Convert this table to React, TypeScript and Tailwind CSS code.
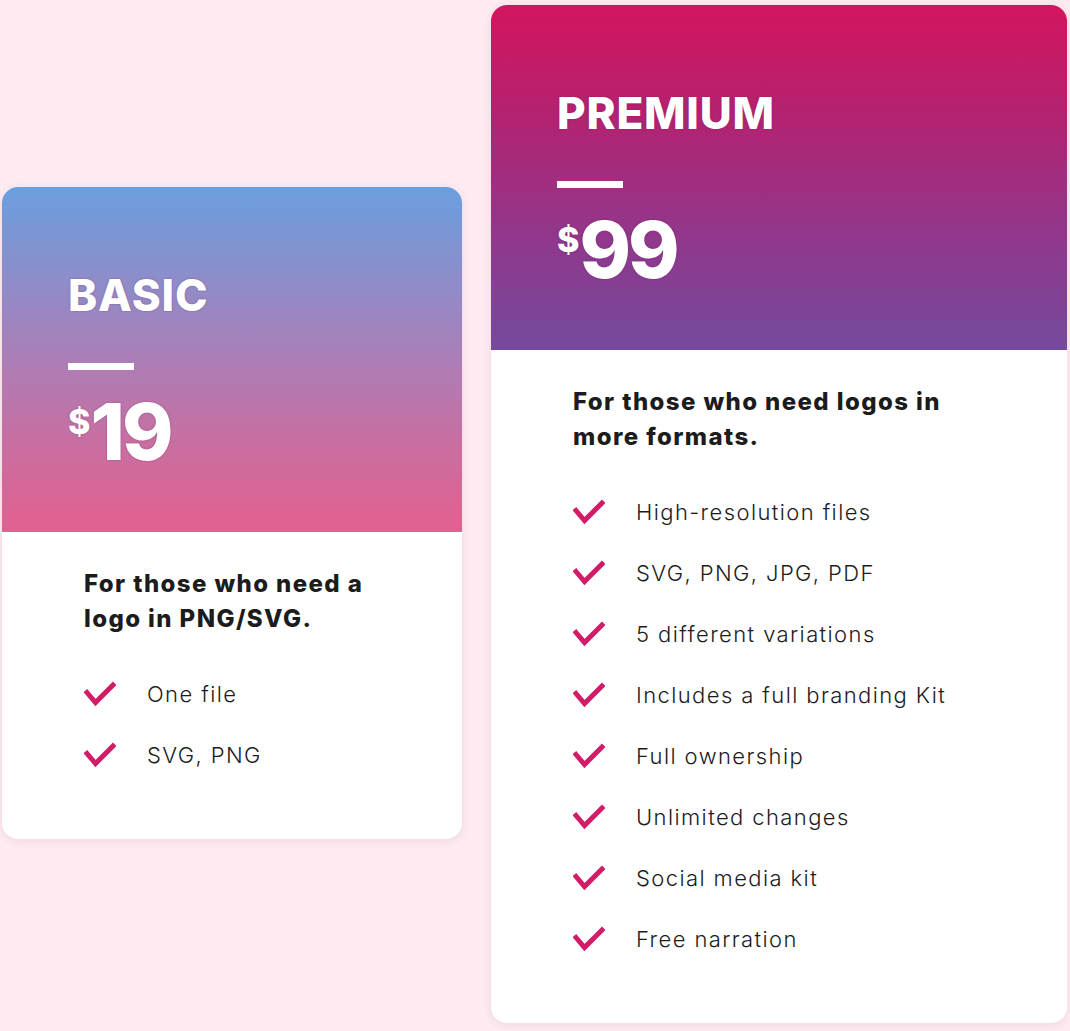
import React from "react";

const Check = () => (
  <svg width="32" height="26" viewBox="0 0 32 26" className="shrink-0">
    <path d="M3 11.5 L11.5 21.5 L29 4" fill="none" stroke="#d21c68" strokeWidth="5" strokeLinecap="square" strokeLinejoin="miter" />
  </svg>
);

const font = { fontFamily: "Inter, 'Noto Sans', sans-serif" };

function Card({
  title,
  price,
  desc,
  items,
  gradient,
  width,
}: {
  title: string;
  price: string;
  desc: string[];
  items: string[];
  gradient: string;
  width: string;
}) {
  return (
    <div className={`${width} bg-white rounded-[16px] overflow-hidden shadow-[0_2px_10px_rgba(120,40,80,0.10)]`}>
      <div className={`h-[345px] ${gradient} pl-[66px] pt-[80px] text-white [text-shadow:0_0_2px_rgba(90,30,90,0.45)]`}>
        <div className="text-[44px] font-extrabold leading-[56px] tracking-[0.8px]">{title}</div>
        <div className="w-[66px] h-[7px] bg-white mt-[40px]" />
        <div className="flex items-start mt-[26px]">
          <span className="text-[34px] font-extrabold leading-[40px] mt-[6px]">$</span>
          <span className="text-[78px] font-extrabold leading-[72px] tracking-[-3px]">{price}</span>
        </div>
      </div>
      <div className="pl-[82px] pt-[34px] pb-[70px]">
        <div className="text-[24px] font-extrabold leading-[35px] text-[#1c1c1c] tracking-[1.4px]">
          {desc.map((d) => (
            <div key={d}>{d}</div>
          ))}
        </div>
        <div className="flex flex-col gap-[33px] mt-[44px]">
          {items.map((it) => (
            <div key={it} className="flex items-center h-[28px]">
              <Check />
              <span className="ml-[31px] text-[22px] font-light text-[#1c1c1c] tracking-[1.4px]">{it}</span>
            </div>
          ))}
        </div>
      </div>
    </div>
  );
}

export default function App() {
  return (
    <div className="w-[1070px] h-[1031px] bg-[#fdebf1] flex items-start pl-[2px]" style={font}>
      <div className="mt-[187px]">
        <Card
          title="BASIC"
          price="19"
          desc={["For those who need a", "logo in PNG/SVG."]}
          items={["One file", "SVG, PNG"]}
          gradient="bg-[linear-gradient(180deg,#6a9fdf_0%,#9f84bf_40%,#c96ea0_75%,#e2608f_100%)]"
          width="w-[460px]"
        />
      </div>
      <div className="mt-[5px] ml-[29px]">
        <Card
          title="PREMIUM"
          price="99"
          desc={["For those who need logos in", "more formats."]}
          items={[
            "High-resolution files",
            "SVG, PNG, JPG, PDF",
            "5 different variations",
            "Includes a full branding Kit",
            "Full ownership",
            "Unlimited changes",
            "Social media kit",
            "Free narration",
          ]}
          gradient="bg-[linear-gradient(180deg,#d3155e_0%,#b5216f_30%,#93368a_65%,#744a9d_100%)]"
          width="w-[576px]"
        />
      </div>
    </div>
  );
}
